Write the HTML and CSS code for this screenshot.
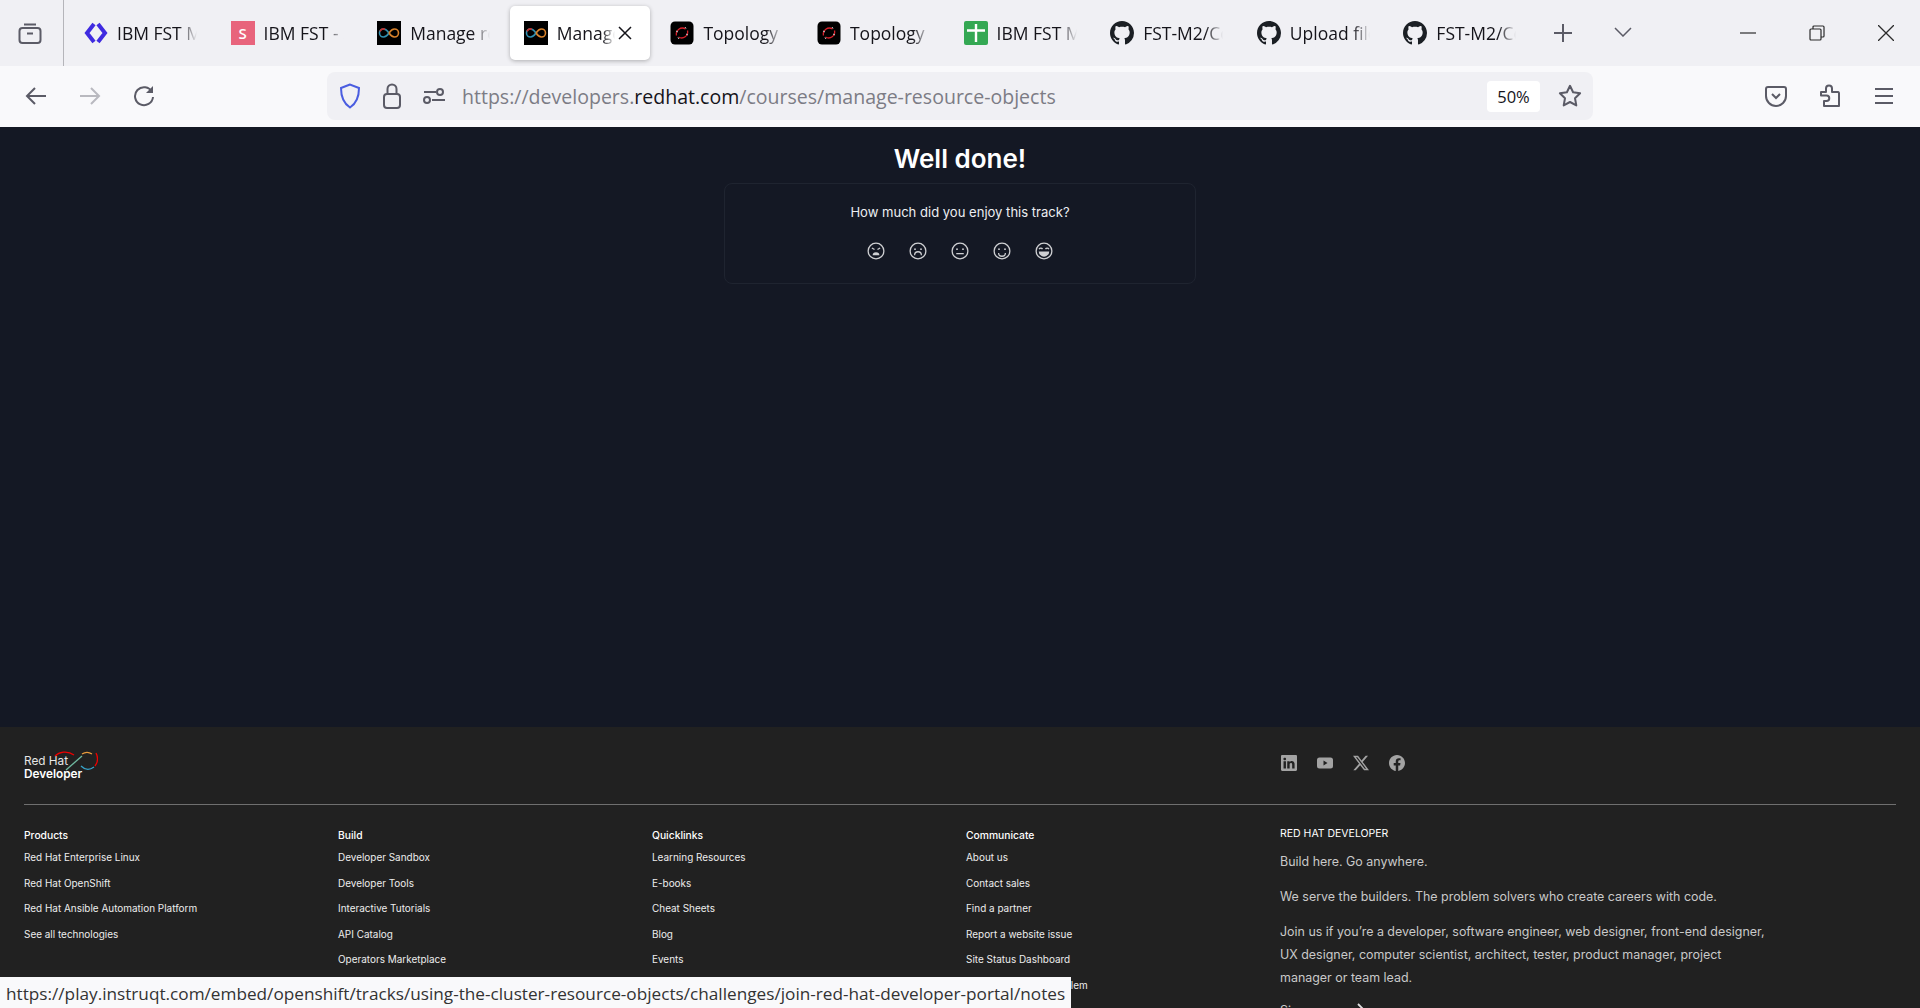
FILE: index.html
```html
<!DOCTYPE html>
<html lang="en">
<head>
<meta charset="utf-8">
<title>Manage resource objects</title>
<link rel="stylesheet" href="styles.css">
</head>
<body>
<svg class="defs" width="0" height="0" aria-hidden="true">
  <symbol id="gh" viewBox="0 0 16 16"><path fill="#1b1f24" d="M8 0C3.58 0 0 3.58 0 8c0 3.54 2.29 6.53 5.47 7.59.4.07.55-.17.55-.38 0-.19-.01-.82-.01-1.49-2.01.37-2.53-.49-2.69-.94-.09-.23-.48-.94-.82-1.13-.28-.15-.68-.52-.01-.53.63-.01 1.08.58 1.23.82.72 1.21 1.87.87 2.33.66.07-.52.28-.87.51-1.07-1.78-.2-3.64-.89-3.64-3.95 0-.87.31-1.59.82-2.15-.08-.2-.36-1.02.08-2.12 0 0 .67-.21 2.2.82.64-.18 1.32-.27 2-.27.68 0 1.36.09 2 .27 1.53-1.04 2.2-.82 2.2-.82.44 1.1.16 1.92.08 2.12.51.56.82 1.27.82 2.15 0 3.07-1.87 3.75-3.65 3.95.29.25.54.73.54 1.48 0 1.07-.01 1.93-.01 2.2 0 .21.15.46.55.38A8.013 8.013 0 0016 8c0-4.42-3.58-8-8-8z"/></symbol>
  <symbol id="inf" viewBox="0 0 24 24"><rect width="24" height="24" fill="#000"/><path d="M12 12c-2-3-3.500-4-5.500-4a4 4 0 0 0 0 8c2 0 3.500-1 5.500-4" fill="none" stroke="#2f8fb0" stroke-width="1.600"/><path d="M12 12c2 3 3.500 4 5.500 4a4 4 0 0 0 0-8c-2 0-3.500 1-5.500 4" fill="none" stroke="#d9822b" stroke-width="1.600"/><path d="M8 8.300a4 4 0 0 0-5 2" fill="none" stroke="#c9302c" stroke-width="1.600"/></symbol>
  <symbol id="os" viewBox="0 0 24 24"><rect x=".5" y=".5" width="23" height="23" rx="4.500" fill="#000"/><path d="M6.500 14.500a6 6 0 0 1 9-6.500M17.500 9.500a6 6 0 0 1-9 6.500" fill="none" stroke="#d8202a" stroke-width="1.300"/><path d="M6 10l2 1M16 13l2 1M15 6l1 1.500M8 16.500l1 1.500" stroke="#ccc" stroke-width="1"/></symbol>
</svg>

<header class="tabstrip">
  <div class="tabs-left">
    <svg class="ic24" viewBox="0 0 24 24" fill="none" stroke="#5b5b66" stroke-width="2"><path d="M6 3.500h12"/><rect x="1.500" y="7" width="21" height="15" rx="3"/><path d="M9 12.500h6"/></svg>
  </div>
  <div class="tabs">
    <div class="tab"><svg class="fav" viewBox="0 0 24 24" fill="none" stroke="#3f2be0" stroke-width="4"><path d="M10 3L3 12l7 9M14 3l7 9-7 9"/></svg><span class="title">IBM FST Mission</span></div>
    <div class="tab"><span class="fav fav-s">S</span><span class="title">IBM FST - Slides</span></div>
    <div class="tab"><svg class="fav"><use href="#inf"/></svg><span class="title">Manage resource</span></div>
    <div class="tab tab-active"><svg class="fav"><use href="#inf"/></svg><span class="title">Manage resource</span><svg class="tab-x" viewBox="0 0 14 14" stroke="#15141a" stroke-width="1.500"><path d="M1 1l12 12M13 1L1 13"/></svg></div>
    <div class="tab"><svg class="fav"><use href="#os"/></svg><span class="title">Topology</span></div>
    <div class="tab"><svg class="fav"><use href="#os"/></svg><span class="title">Topology</span></div>
    <div class="tab"><svg class="fav" viewBox="0 0 24 24"><rect width="24" height="24" rx="2" fill="#34a853"/><path d="M12 3v18M3 9.500h18" stroke="#fff" stroke-width="2.400"/></svg><span class="title">IBM FST Mission</span></div>
    <div class="tab"><svg class="fav"><use href="#gh"/></svg><span class="title">FST-M2/Course</span></div>
    <div class="tab"><svg class="fav"><use href="#gh"/></svg><span class="title">Upload files</span></div>
    <div class="tab"><svg class="fav"><use href="#gh"/></svg><span class="title">FST-M2/Course</span></div>
  </div>
  <svg class="strip-plus" viewBox="0 0 18 18" stroke="#5b5b66" stroke-width="2"><path d="M9 0v18M0 9h18"/></svg>
  <svg class="strip-chev" viewBox="0 0 18 10" fill="none" stroke="#5b5b66" stroke-width="1.500"><path d="M1 1l8 8 8-8"/></svg>
  <div class="winctl">
    <svg class="win" viewBox="0 0 16 16" stroke="#2b2b2b" stroke-width="1.200"><path d="M0 8h16"/></svg>
    <svg class="win" viewBox="0 0 16 16" fill="none" stroke="#2b2b2b" stroke-width="1.200"><rect x="1" y="4" width="11" height="11" rx="1"/><path d="M4 4V2a1 1 0 0 1 1-1h9a1 1 0 0 1 1 1v9a1 1 0 0 1-1 1h-2"/></svg>
    <svg class="win" viewBox="0 0 16 16" stroke="#2b2b2b" stroke-width="1.300"><path d="M0 0l16 16M16 0L0 16"/></svg>
  </div>
</header>

<nav class="navbar">
  <div class="nav-btns">
    <svg class="ic22" viewBox="0 0 22 22" fill="none" stroke="#5b5b66" stroke-width="2"><path d="M21 11H2M10 3l-8 8 8 8"/></svg>
    <svg class="ic22" viewBox="0 0 22 22" fill="none" stroke="#b9b9bf" stroke-width="2"><path d="M1 11h19M12 3l8 8-8 8"/></svg>
    <svg class="ic22" viewBox="0 0 22 22" fill="none" stroke="#5b5b66" stroke-width="2"><path d="M19 7a9 9 0 1 0 1 5"/><path d="M20 1v7h-7" fill="#5b5b66" stroke="none"/></svg>
  </div>
  <div class="urlbar">
    <svg class="shield" viewBox="0 0 22 26" fill="none" stroke="#4a5de0" stroke-width="2"><path d="M11 1.500L2 5c0 9 2 15 9 19.500C18 20 20 14 20 5z"/></svg>
    <svg class="lock" viewBox="0 0 18 26" fill="none" stroke="#5b5b66" stroke-width="2"><rect x="1" y="11" width="16" height="14" rx="3"/><path d="M4.500 11V6a4.500 4.500 0 0 1 9 0v5"/></svg>
    <svg class="sliders" viewBox="0 0 22 16" fill="none" stroke="#5b5b66" stroke-width="2"><path d="M1 4h12"/><circle cx="17" cy="4" r="3"/><circle cx="4" cy="12" r="3"/><path d="M9 12h13"/></svg>
    <span class="url">https://developers.<b class="url-host">redhat.com</b>/courses/manage-resource-objects</span>
    <span class="zoompill">50%</span>
    <svg class="star" viewBox="0 0 24 24" fill="none" stroke="#5b5b66" stroke-width="2" stroke-linejoin="round"><path d="M12 1.800l3.100 6.500 7 1-5.100 5 1.300 7.100L12 18l-6.300 3.400L7 14.300l-5.100-5 7-1z"/></svg>
  </div>
  <div class="nav-right">
    <svg class="ic22" viewBox="0 0 22 22" fill="none" stroke="#5b5b66" stroke-width="2"><path d="M3 2h16a2 2 0 0 1 2 2v7a10 10 0 0 1-20 0V4a2 2 0 0 1 2-2z"/><path d="M7 9l4 4 4-4"/></svg>
    <svg class="puzzle" viewBox="0 0 22 24" fill="none" stroke="#5b5b66" stroke-width="2" stroke-linejoin="round"><path d="M2 8h5V4.500a3 3 0 0 1 6 0V8h6a1.500 1.500 0 0 1 1 1v13H5v-5h2.500a2.500 2.500 0 0 0 0-5.500H2z"/></svg>
    <svg class="ic22" viewBox="0 0 22 22" stroke="#5b5b66" stroke-width="2"><path d="M2 4h18M2 11h18M2 18h18"/></svg>
  </div>
</nav>

<main class="content">
  <h1 class="welldone">Well done!</h1>
  <section class="card">
    <p class="question">How much did you enjoy this track?</p>
    <div class="faces">
      <svg class="emoji" viewBox="0 0 24 24" fill="none" stroke="#cfd0d3" stroke-width="1.700"><circle cx="12" cy="12" r="10.500"/><path d="M6.500 8l3.500 2M17.500 8L14 10"/><path d="M7.500 17.500a4.500 4 0 0 1 9 0z" fill="#cfd0d3" stroke="none"/></svg>
      <svg class="emoji" viewBox="0 0 24 24" fill="none" stroke="#cfd0d3" stroke-width="1.700"><circle cx="12" cy="12" r="10.500"/><circle cx="8" cy="9.500" r="1.200" fill="#cfd0d3" stroke="none"/><circle cx="16" cy="9.500" r="1.200" fill="#cfd0d3" stroke="none"/><path d="M7.500 17.500a4.500 4.500 0 0 1 9 0"/></svg>
      <svg class="emoji" viewBox="0 0 24 24" fill="none" stroke="#cfd0d3" stroke-width="1.700"><circle cx="12" cy="12" r="10.500"/><circle cx="8" cy="9.500" r="1.200" fill="#cfd0d3" stroke="none"/><circle cx="16" cy="9.500" r="1.200" fill="#cfd0d3" stroke="none"/><path d="M7 15.500h10"/></svg>
      <svg class="emoji" viewBox="0 0 24 24" fill="none" stroke="#cfd0d3" stroke-width="1.700"><circle cx="12" cy="12" r="10.500"/><circle cx="8" cy="9.500" r="1.200" fill="#cfd0d3" stroke="none"/><circle cx="16" cy="9.500" r="1.200" fill="#cfd0d3" stroke="none"/><path d="M7.500 14.500a4.500 4.500 0 0 0 9 0"/></svg>
      <svg class="emoji" viewBox="0 0 24 24" fill="none" stroke="#cfd0d3" stroke-width="1.700"><circle cx="12" cy="12" r="10.500"/><path d="M5.500 9.500a2.500 2.500 0 0 1 4.500 0M14 9.500a2.500 2.500 0 0 1 4.500 0"/><path d="M5 12.500h14a7 7 0 0 1-14 0z" fill="#cfd0d3" stroke="none"/></svg>
    </div>
  </section>
</main>

<footer class="footer">
  <div class="foot-top">
    <div class="logo">
      <span class="logo-l1">Red Hat</span>
      <span class="logo-l2">Developer</span>
      <svg class="logo-mark" viewBox="0 0 44 20" fill="none" stroke-width="1.300"><path d="M1 5C5 1 13-1 20 4" stroke="#e00"/><path d="M12 19L28 5" stroke="#6fb9a0"/><path d="M28 3c3-2 7-2 10 0" stroke="#e89b3c"/><path d="M42 2c2 4 2 9-1 13" stroke="#e00"/><path d="M27 15c4 4 9 4 13 1" stroke="#37a3c9"/></svg>
    </div>
    <div class="social">
      <svg class="soc" viewBox="0 0 16 16"><path d="M0 1.146C0 .513.526 0 1.175 0h13.650C15.474 0 16 .513 16 1.146v13.708c0 .633-.526 1.146-1.175 1.146H1.175C.526 16 0 15.487 0 14.854V1.146zm4.943 12.248V6.169H2.542v7.225h2.401zm-1.200-8.212c.837 0 1.358-.554 1.358-1.248-.015-.709-.520-1.248-1.342-1.248-.822 0-1.359.540-1.359 1.248 0 .694.521 1.248 1.327 1.248h.016zm4.908 8.212V9.359c0-.216.016-.432.080-.586.173-.431.568-.878 1.232-.878.869 0 1.216.662 1.216 1.634v3.865h2.401V9.250c0-2.220-1.184-3.252-2.764-3.252-1.274 0-1.845.700-2.165 1.193V6.169h-2.400c.030.678 0 7.225 0 7.225h2.400z"/></svg>
      <svg class="soc" viewBox="0 0 16 16"><path fill-rule="evenodd" d="M2.500 2.500h11A2.500 2.500 0 0 1 16 5v6a2.500 2.500 0 0 1-2.500 2.500h-11A2.500 2.500 0 0 1 0 11V5a2.500 2.500 0 0 1 2.500-2.500zM6.500 5.500v5l4-2.500z"/></svg>
      <svg class="soc" viewBox="0 0 16 16"><path d="M12.600.750h2.454l-5.360 6.142L16 15.250h-4.937l-3.867-5.070-4.425 5.070H.316l5.733-6.570L0 .750h5.063l3.495 4.633L12.601.750Zm-.860 13.028h1.360L4.323 2.145H2.865l8.875 11.633Z"/></svg>
      <svg class="soc" viewBox="0 0 16 16"><path d="M16 8.049c0-4.446-3.582-8.050-8-8.050C3.580 0-.002 3.603-.002 8.050c0 4.017 2.926 7.347 6.750 7.951v-5.625h-2.030V8.050H6.750V6.275c0-2.017 1.195-3.131 3.022-3.131.876 0 1.791.157 1.791.157v1.980h-1.009c-.993 0-1.303.621-1.303 1.258v1.510h2.218l-.354 2.326H9.250V16c3.824-.604 6.750-3.934 6.750-7.951z"/></svg>
    </div>
  </div>
  <div class="foot-grid">
    <div class="foot-col"><h2 class="foot-h">Products</h2><a class="foot-link">Red Hat Enterprise Linux</a><a class="foot-link">Red Hat OpenShift</a><a class="foot-link">Red Hat Ansible Automation Platform</a><a class="foot-link">See all technologies</a></div>
    <div class="foot-col"><h2 class="foot-h">Build</h2><a class="foot-link">Developer Sandbox</a><a class="foot-link">Developer Tools</a><a class="foot-link">Interactive Tutorials</a><a class="foot-link">API Catalog</a><a class="foot-link">Operators Marketplace</a></div>
    <div class="foot-col"><h2 class="foot-h">Quicklinks</h2><a class="foot-link">Learning Resources</a><a class="foot-link">E-books</a><a class="foot-link">Cheat Sheets</a><a class="foot-link">Blog</a><a class="foot-link">Events</a></div>
    <div class="foot-col"><h2 class="foot-h">Communicate</h2><a class="foot-link">About us</a><a class="foot-link">Contact sales</a><a class="foot-link">Find a partner</a><a class="foot-link">Report a website issue</a><a class="foot-link">Site Status Dashboard</a><a class="foot-link">Report a security problem</a></div>
    <div class="foot-about">
      <h2 class="about-h">RED HAT DEVELOPER</h2>
      <p class="about-p">Build here. Go anywhere.</p>
      <p class="about-p">We serve the builders. The problem solvers who create careers with code.</p>
      <p class="about-p about-wide">Join us if you’re a developer, software engineer, web designer, front-end designer, UX designer, computer scientist, architect, tester, product manager, project manager or team lead.</p>
      <a class="about-cta">Sign up now<svg class="cta-arrow" viewBox="0 0 8 14" fill="none" stroke="#e0e0e0" stroke-width="1.800"><path d="M1 1l6 6-6 6"/></svg></a>
    </div>
  </div>
</footer>

<div class="status">https://play.instruqt.com/embed/openshift/tracks/using-the-cluster-resource-objects/challenges/join-red-hat-developer-portal/notes</div>
</body>
</html>
```
FILE: styles.css
```css
* { box-sizing: border-box; }
html, body { margin: 0; height: 100%; }
body {
  height: 1008px;
  overflow: hidden;
  position: relative;
  display: flex;
  flex-direction: column;
  font-family: "Inter", "Liberation Sans", sans-serif;
  background: #141824;
}
.defs { position: absolute; }

/* Browser tab strip */
.tabstrip {
  flex: 0 0 66px;
  display: flex;
  align-items: center;
  background: #f0f0f4;
  font-family: "Open Sans", "Noto Sans", sans-serif;
  color: #15141a;
}
.tabs-left {
  flex: 0 0 64px;
  height: 66px;
  display: flex;
  align-items: center;
  padding-left: 18px;
  border-right: 1px solid #b5b5ba;
}
.ic24 { width: 24px; height: 24px; }
.tabs {
  display: flex;
  gap: 6.6px;
  margin-left: 6px;
  align-items: center;
}
.tab {
  width: 140px;
  height: 54px;
  display: flex;
  align-items: center;
  padding: 0 13px 0 14px;
  gap: 9px;
  border-radius: 5px;
}
.tab-active {
  background: #fff;
  box-shadow: 0 1px 4px rgba(0, 0, 0, .28);
}
.fav { width: 24px; height: 24px; flex: none; }
.fav-s {
  background: #e8647c;
  color: #fff;
  font-size: 15px;
  font-weight: 600;
  text-align: center;
  line-height: 24px;
}
.title {
  flex: 1;
  min-width: 0;
  font-size: 17.500px;
  white-space: nowrap;
  overflow: hidden;
  -webkit-mask-image: linear-gradient(to right, #000 78%, transparent);
  mask-image: linear-gradient(to right, #000 78%, transparent);
}
.tab-x { width: 14px; height: 14px; flex: none; margin: 0 5px 0 -6px; }
.strip-plus { width: 18px; height: 18px; margin-left: 24.500px; }
.strip-chev { width: 18px; height: 10px; margin-left: 42px; margin-bottom: 2px; }
.winctl { margin-left: auto; display: flex; gap: 53px; padding-right: 26px; }
.win { width: 16px; height: 16px; }

/* Navigation bar */
.navbar {
  flex: 0 0 61px;
  display: flex;
  align-items: center;
  background: #f9f9fb;
  padding-bottom: 1px;
}
.nav-btns {
  flex: 0 0 327px;
  display: flex;
  gap: 32px;
  padding-left: 25px;
}
.ic22 { width: 22px; height: 22px; }
.puzzle { width: 22px; height: 24px; }
.urlbar {
  flex: 0 0 1266px;
  height: 48px;
  display: flex;
  align-items: center;
  background: #f0f0f4;
  border-radius: 8px;
  padding-left: 12px;
  font-family: "Open Sans", "Noto Sans", sans-serif;
}
.shield { width: 22px; height: 26px; flex: none; }
.lock { width: 18px; height: 26px; margin-left: 22px; flex: none; }
.sliders { width: 22px; height: 16px; margin-left: 22px; flex: none; }
.url { margin-left: 17px; padding-top: 1px; font-size: 19.550px; color: #7c7c85; white-space: nowrap; flex: 1; }
.url-host { font-weight: 400; color: #15141a; }
.zoompill {
  width: 53px;
  height: 31px;
  background: #fff;
  border-radius: 4px;
  text-align: center;
  line-height: 31px;
  font-size: 16.500px;
  color: #15141a;
}
.star { width: 24px; height: 24px; margin-left: 18px; margin-right: 11px; flex: none; }
.nav-right {
  display: flex;
  align-items: center;
  gap: 32px;
  margin-left: auto;
  padding-right: 25px;
}

/* Main content */
.content {
  flex: 0 0 600px;
  display: flex;
  flex-direction: column;
  align-items: center;
  background: #141824;
  color: #fff;
}
.welldone {
  margin: 15px 0 0;
  font-size: 26px;
  line-height: 34px;
  font-weight: 600;
}
.card {
  width: 472px;
  height: 101px;
  margin-top: 7px;
  border: 1px solid #1f2430;
  border-radius: 8px;
  display: flex;
  flex-direction: column;
  align-items: center;
}
.question {
  margin: 18px 0 0;
  font-size: 13.050px;
  line-height: 20px;
  color: #eceef2;
}
.faces { display: flex; gap: 24px; margin-top: 19.500px; }
.emoji { width: 18px; height: 18px; }

/* Footer */
.footer {
  flex: 1;
  background: #212121;
  padding: 24px 24px 0;
  color: #fff;
  overflow: hidden;
}
.foot-top {
  display: grid;
  grid-template-columns: repeat(6, 1fr);
  gap: 12px;
  height: 54px;
  border-bottom: 1px solid #6f6f6f;
}
.logo { grid-column: span 4; position: relative; display: flex; flex-direction: column; }
.logo-l1 { font-size: 11.800px; line-height: 13px; margin-top: 4px; color: #e6e6e6; }
.logo-l2 { font-size: 11.800px; line-height: 13px; font-weight: 600; }
.logo-mark { position: absolute; left: 30px; top: 0; width: 44px; height: 20px; }
.social { grid-column: span 2; display: flex; gap: 20px; align-items: flex-start; padding: 4px 0 0 1px; }
.soc { width: 16px; height: 16px; fill: #a3a3a3; }
.foot-grid {
  display: grid;
  grid-template-columns: repeat(6, 1fr);
  gap: 12px;
  padding-top: 22px;
}
.foot-col { display: flex; flex-direction: column; align-items: flex-start; }
.foot-h { margin: 0 0 2px; font-size: 10.300px; line-height: 16px; font-weight: 500; }
.foot-link { font-size: 9.950px; line-height: 25.500px; color: #ededed; white-space: nowrap; }
.foot-about { grid-column: span 2; color: #c9c9c9; }
.about-h { margin: 0 0 9px; font-size: 10.500px; line-height: 14px; font-weight: 400; color: #fff; }
.about-p { margin: 0 0 12px; font-size: 12.450px; line-height: 23px; }
.about-wide { width: 495px; margin-bottom: 10px; }
.about-cta { font-size: 12.450px; line-height: 23px; white-space: nowrap; }
.cta-arrow { width: 8px; height: 14px; margin-left: 4px; vertical-align: -2px; }

/* Link status overlay */
.status {
  position: absolute;
  left: 0;
  bottom: 0;
  width: 1071px;
  height: 31px;
  padding: 1px 0 0 6px;
  background: #f9f9fb;
  color: #333;
  font-family: "Open Sans", "Noto Sans", sans-serif;
  font-size: 17.200px;
  line-height: 31px;
  white-space: nowrap;
}
```
